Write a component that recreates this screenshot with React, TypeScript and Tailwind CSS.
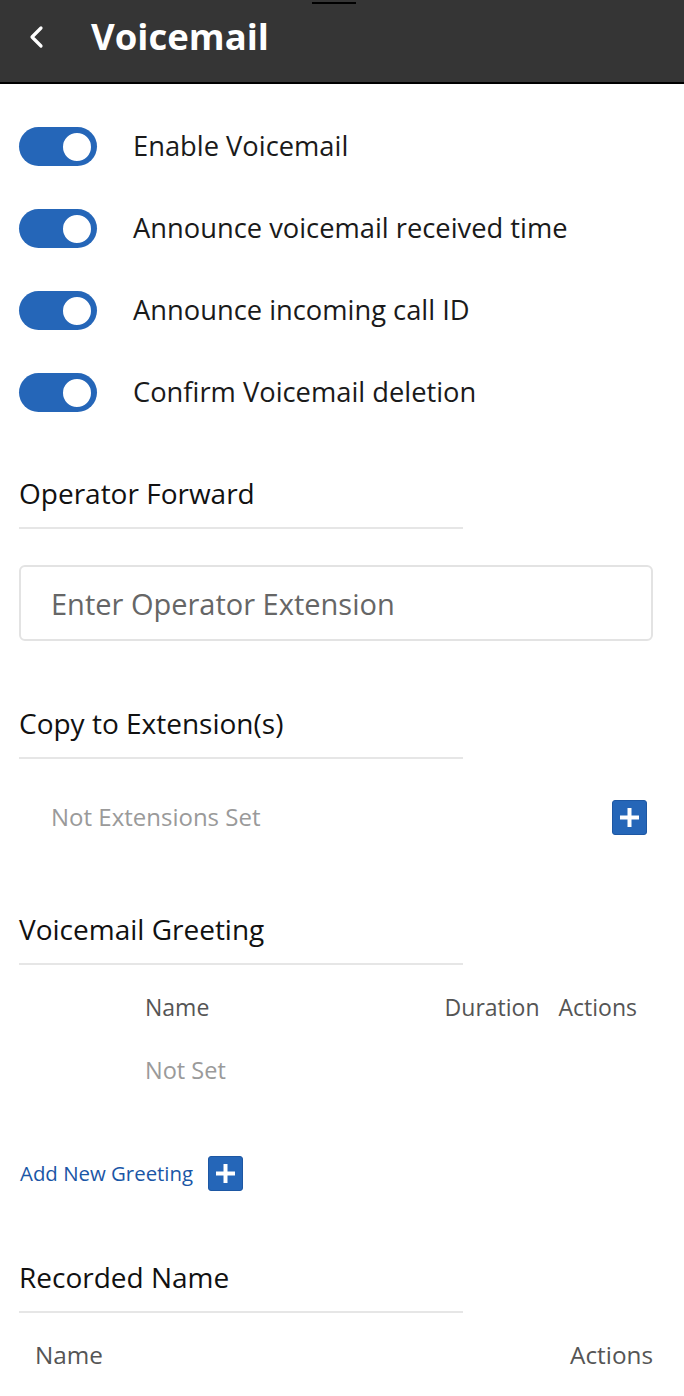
import { useState } from 'react'

const TOGGLES = [
  'Enable Voicemail',
  'Announce voicemail received time',
  'Announce incoming call ID',
  'Confirm Voicemail deletion',
]

function Toggle({ on, onClick }: { on: boolean; onClick: () => void }) {
  return (
    <button
      onClick={onClick}
      className={`w-[78px] h-[39px] rounded-full flex items-center px-[3px] shrink-0 ${
        on ? 'bg-[#2566b8] justify-end' : 'bg-[#cfcfcf] justify-start'
      }`}
    >
      <span className={`w-[34px] h-[34px] rounded-full bg-white border-[3px] ${on ? 'border-[#2566b8]' : 'border-[#cfcfcf]'}`} />
    </button>
  )
}

function PlusButton() {
  return (
    <button className="w-[35px] h-[35px] rounded-[3px] bg-[#2566b8] border border-[#1d57a3] flex items-center justify-center shrink-0">
      <svg width="21" height="21" viewBox="0 0 21 21">
        <rect x="8.5" y="1" width="4" height="19" fill="#fff" />
        <rect x="1" y="8.5" width="19" height="4" fill="#fff" />
      </svg>
    </button>
  )
}

function SectionTitle({ children, className = '' }: { children: string; className?: string }) {
  return (
    <div className={`w-[444px] pb-[16px] border-b-2 border-[#e6e6e6] text-[28px] leading-[36px] font-medium text-[#111] ${className}`}>
      {children}
    </div>
  )
}

export default function App() {
  const [toggles, setToggles] = useState([true, true, true, true])

  return (
    <div className="w-[684px] min-h-[1396px] bg-white" style={{ fontFamily: '"Open Sans", "Noto Sans", sans-serif' }}>
      {/* Header */}
      <div className="relative h-[84px] pb-[9px] bg-[#353535] border-b-2 border-black flex items-center">
        <div className="absolute top-[2px] left-[312px] w-[44px] h-[2px] bg-black" />
        <svg className="ml-[26px]" width="22" height="26" viewBox="0 0 22 26">
          <path d="M15 4 L6 13 L15 22" stroke="#fff" strokeWidth="3.2" fill="none" strokeLinecap="round" strokeLinejoin="round" />
        </svg>
        <h1 className="ml-[43px] text-white text-[36.5px] font-bold leading-none">Voicemail</h1>
      </div>

      <div className="pl-[19px] pr-[31px]">
        {/* Toggles */}
        <div className="pt-[43px] flex flex-col gap-[43px]">
          {TOGGLES.map((label, i) => (
            <div key={label} className="flex items-center h-[39px]">
              <Toggle on={toggles[i]} onClick={() => setToggles(t => t.map((v, j) => (j === i ? !v : v)))} />
              <span className="ml-[36px] text-[27.3px] text-[#1a1a1a] whitespace-nowrap">{label}</span>
            </div>
          ))}
        </div>

        {/* Operator Forward */}
        <SectionTitle className="mt-[63px]">Operator Forward</SectionTitle>
        <input
          type="text"
          placeholder="Enter Operator Extension"
          className="mt-[36px] w-full h-[76px] border-2 border-[#e3e3e3] rounded-[6px] px-[30px] text-[29px] text-[#333] placeholder-[#666] focus:outline-none"
        />

        {/* Copy to Extension(s) */}
        <SectionTitle className="mt-[64px]">Copy to Extension(s)</SectionTitle>
        <div className="mt-[40px] flex items-center justify-between pl-[32px] pr-[6px]">
          <span className="text-[24px] text-[#9a9a9a]">Not Extensions Set</span>
          <PlusButton />
        </div>

        {/* Voicemail Greeting */}
        <SectionTitle className="mt-[76px]">Voicemail Greeting</SectionTitle>
        <div className="mt-[27px] flex items-center text-[23px] leading-[30px] text-[#555]">
          <span className="ml-[126px] flex-1">Name</span>
          <span>Duration</span>
          <span className="ml-[19px] mr-[16px]">Actions</span>
        </div>
        <div className="mt-[33px] ml-[126px] text-[23.5px] leading-[30px] text-[#9a9a9a]">Not Set</div>

        <div className="mt-[71px] flex items-center">
          <span className="text-[20.4px] text-[#1a56a6] ml-[1px]">Add New Greeting</span>
          <span className="ml-[15px]">
            <PlusButton />
          </span>
        </div>

        {/* Recorded Name */}
        <SectionTitle className="mt-[68px]">Recorded Name</SectionTitle>
        <div className="mt-[27px] flex items-center justify-between text-[24.3px] leading-[30px] text-[#555]">
          <span className="ml-[16px]">Name</span>
          <span>Actions</span>
        </div>
      </div>
    </div>
  )
}
